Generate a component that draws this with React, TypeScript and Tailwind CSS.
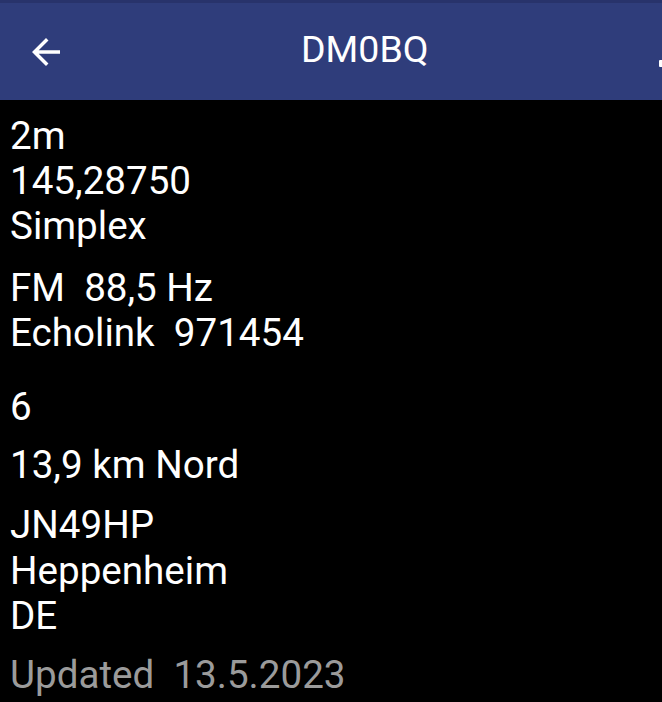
const groups: { lines: string[]; gap: string; muted?: boolean }[] = [
  { lines: ["2m", "145,28750", "Simplex"], gap: "mt-0" },
  { lines: ["FM  88,5 Hz", "Echolink  971454"], gap: "mt-[16px]" },
  { lines: ["6"], gap: "mt-[29px]" },
  { lines: ["13,9 km Nord"], gap: "mt-[13px]" },
  { lines: ["JN49HP", "Heppenheim", "DE"], gap: "mt-[15px]" },
  { lines: ["Updated  13.5.2023"], gap: "mt-[14px]", muted: true },
];

function ArrowBack() {
  return (
    <svg viewBox="0 0 24 24" className="w-[42px] h-[42px] fill-white shrink-0">
      <path d="M20 11H7.83l5.59-5.59L12 4l-8 8 8 8 1.41-1.41L7.83 13H20v-2z" />
    </svg>
  );
}

export default function App() {
  return (
    <div className="h-[702px] w-[662px] overflow-hidden bg-black text-white font-['Roboto',sans-serif]">
      <div className="h-[3px] bg-[#28336b]" />
      <header className="h-[97px] bg-[#2f3d7b] flex items-center pl-[25px] overflow-hidden">
        <ArrowBack />
        <span className="ml-[234px] text-[37.5px] leading-none pb-[3px]">DM0BQ</span>
        <div className="ml-auto mt-[24px] w-[3px] h-[7px] bg-white rounded-l-[1px] shrink-0" />
      </header>
      <main className="px-[10px] pt-[13px] text-[38.6px] leading-[45.2px]">
        {groups.map((g, i) => (
          <div key={i} className={`${g.gap} ${g.muted ? "text-[#9b9b9b]" : ""}`}>
            {g.lines.map(l => (
              <div key={l} className="whitespace-pre">{l}</div>
            ))}
          </div>
        ))}
      </main>
    </div>
  );
}
